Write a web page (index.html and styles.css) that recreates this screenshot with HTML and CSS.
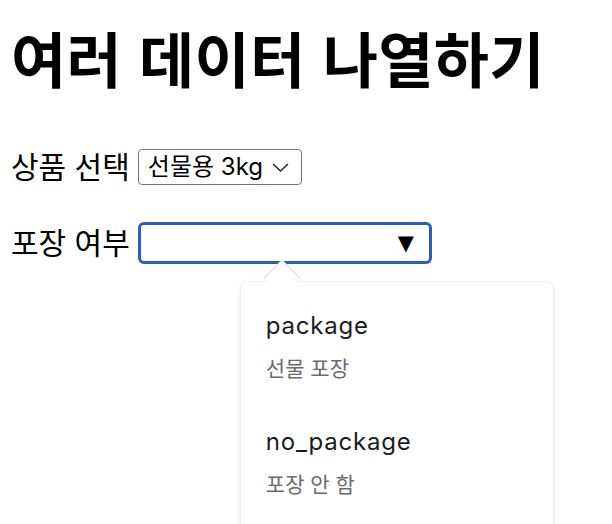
FILE: index.html
```html
<!DOCTYPE html>
<html lang="ko">
<head>
<meta charset="utf-8">
<title>여러 데이터 나열하기</title>
<link rel="stylesheet" href="styles.css">
</head>
<body>
<main class="page">
  <h1 class="title">여러 데이터 나열하기</h1>
  <div class="row row-first">
    <span class="label">상품 선택</span>
    <div class="select">
      <span class="select-value">선물용 3kg</span>
      <svg class="chevron" width="17" height="9" viewBox="0 0 17 9"><path d="M1 1 L8.5 8 L16 1" fill="none" stroke="#222" stroke-width="1.4"/></svg>
    </div>
  </div>
  <div class="row row-second">
    <span class="label">포장 여부</span>
    <div class="combo">
      <div class="input">
        <span class="arrow">▼</span>
      </div>
      <div class="popup">
        <span class="pointer"></span>
        <div class="option">
          <div class="opt-value">package</div>
          <div class="opt-label">선물 포장</div>
        </div>
        <div class="option">
          <div class="opt-value">no_package</div>
          <div class="opt-label">포장 안 함</div>
        </div>
      </div>
    </div>
  </div>
</main>
</body>
</html>
```

FILE: styles.css
```css
html, body {
  margin: 0;
  padding: 0;
  background: #ffffff;
}
body {
  font-family: "Noto Sans CJK KR", "Noto Sans", sans-serif;
  color: #000;
  overflow: hidden;
  height: 524px;
}
.page {
  padding: 21px 11px 0 11px;
  display: flex;
  flex-direction: column;
}
.title {
  font-size: 60px;
  font-weight: 700;
  line-height: 72px;
  margin: 0 0 56px 0;
  letter-spacing: 0.3px;
}
.row {
  display: flex;
  align-items: center;
  gap: 8px;
}
.row-second {
  margin-top: 37px;
}
.label {
  font-size: 30px;
  line-height: 36px;
  position: relative;
  top: -2px;
}
.select {
  box-sizing: border-box;
  width: 164px;
  height: 36px;
  border: 1px solid #767676;
  border-radius: 4px;
  display: flex;
  align-items: center;
  padding: 0 9px 0 9px;
  gap: 9px;
}
.select-value {
  font-family: "Inter", "Noto Sans CJK KR", sans-serif;
  font-size: 24px;
  line-height: 30px;
  color: #000;
}
.chevron {
  display: block;
}
.combo {
  position: relative;
}
.input {
  box-sizing: border-box;
  width: 294px;
  height: 42px;
  border: 3px solid #2b5cc6;
  border-radius: 6px;
  display: flex;
  align-items: center;
  justify-content: flex-end;
  padding-right: 15px;
}
.arrow {
  font-family: "DejaVu Sans", sans-serif;
  font-size: 21px;
  line-height: 22px;
  color: #000;
}
.popup {
  position: absolute;
  left: 103px;
  top: 60px;
  width: 312px;
  height: 250px;
  box-sizing: border-box;
  background: #fff;
  border-radius: 7px 7px 0 0;
  box-shadow: 0 0 2px rgba(0,0,0,0.12), 0 2px 6px rgba(0,0,0,0.10);
  padding: 29px 0 0 25px;
}
.pointer {
  position: absolute;
  left: 28px;
  top: -17px;
  width: 25px;
  height: 25px;
  background: #fff;
  border-top: 1px solid #dcdcdc;
  border-left: 1px solid #dcdcdc;
  transform: rotate(45deg);
  transform-origin: center;
}
.option {
  position: relative;
  margin-bottom: 45px;
}
.opt-value {
  font-family: "Inter", "Noto Sans", sans-serif;
  font-size: 24px;
  line-height: 30px;
  color: #1c1c1c;
  letter-spacing: 0.8px;
}
.opt-label {
  font-size: 21px;
  line-height: 30px;
  color: #6b6b6b;
  margin-top: 11px;
}
```
